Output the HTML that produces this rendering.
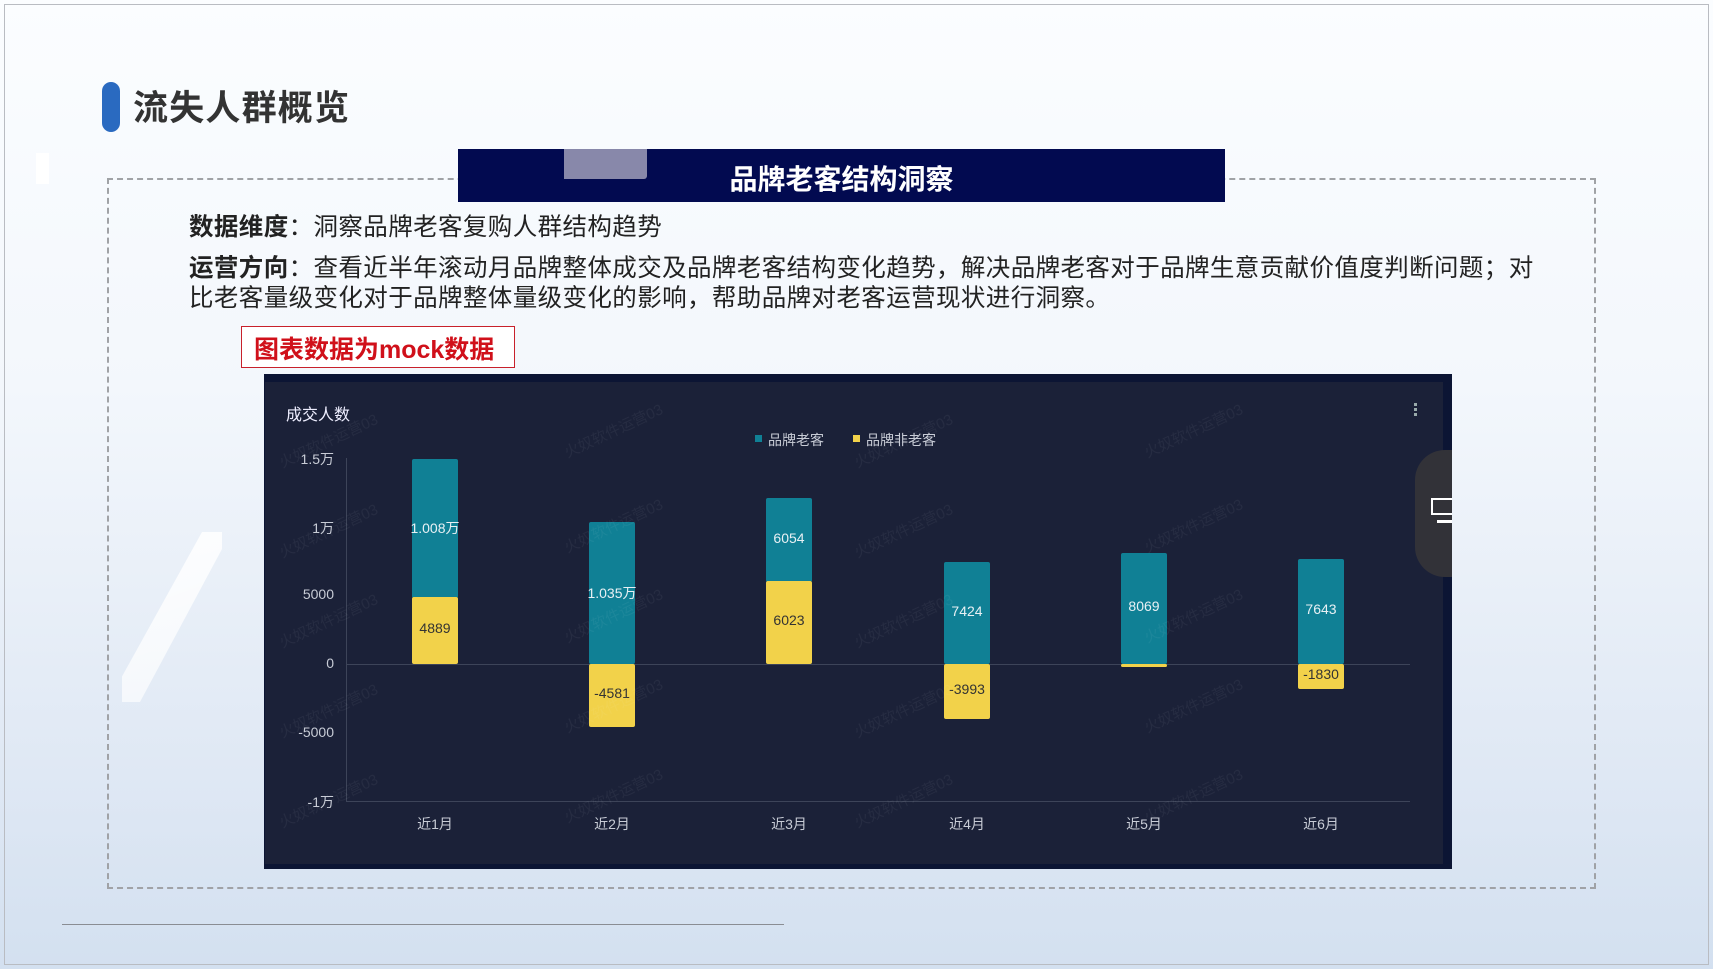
<!DOCTYPE html>
<html><head><meta charset="utf-8"><style>
*{margin:0;padding:0;box-sizing:border-box}
body{width:1713px;height:969px;overflow:hidden;position:relative;font-family:"Liberation Sans","Noto Sans CJK SC",sans-serif;background:linear-gradient(180deg,#fbfdff 0%,#f3f7fc 40%,#dfe8f4 80%,#d3e0f0 100%)}
.abs{position:absolute}
.frame{left:4px;top:4px;width:1705px;height:961px;border:1px solid #b9bcc2}
.t{white-space:nowrap}
.bar{position:absolute;width:46px;border-radius:2px}
.tl{background:#108095}.yl{background:#f2d24a}
.bl{position:absolute;width:80px;text-align:center;font-size:14px;white-space:nowrap}
.yt{position:absolute;left:268px;width:66px;text-align:right;font-size:14px;color:#c8ccd6}
.xl{position:absolute;top:814px;width:80px;text-align:center;font-size:14px;color:#c8ccd6}
.wm{position:absolute;color:rgba(255,255,255,0.05);font-size:15px;transform:rotate(-25deg);white-space:nowrap}
</style></head><body>
<div class="abs frame"></div>
<div class="abs" style="left:122px;top:532px;width:100px;height:170px;background:linear-gradient(160deg,rgba(255,255,255,0.9),rgba(255,255,255,0.6));clip-path:polygon(80% 0,100% 0,100% 10%,18% 100%,0 100%,0 85%)"></div>
<div class="abs" style="left:36px;top:153px;width:13px;height:31px;background:rgba(255,255,255,0.9)"></div>
<div class="abs" style="left:102px;top:82px;width:18px;height:50px;border-radius:9px;background:#2a6ac0"></div>
<div class="abs t" style="left:133px;top:80px;font-size:35px;font-weight:bold;color:#333;letter-spacing:1.2px">流失人群概览</div>
<div class="abs" style="left:107px;top:178px;width:1489px;height:711px;border:2px dashed #a0a2a6"></div>
<div class="abs" style="left:458px;top:149px;width:767px;height:53px;background:#020a50"></div>
<div class="abs" style="left:564px;top:149px;width:83px;height:30px;background:#8888aa;border-radius:0 0 3px 0"></div>
<div class="abs t" style="left:458px;top:158px;width:767px;text-align:center;font-size:28px;font-weight:bold;color:#fff">品牌老客结构洞察</div>
<div class="abs t" style="left:189px;top:213px;font-size:24.5px;color:#222;line-height:30px;letter-spacing:0.4px"><b>数据维度</b>：洞察品牌老客复购人群结构趋势</div>
<div class="abs t" style="left:189px;top:254px;font-size:24.5px;color:#222;line-height:30px;letter-spacing:0.4px"><b>运营方向</b>：查看近半年滚动月品牌整体成交及品牌老客结构变化趋势，解决品牌老客对于品牌生意贡献价值度判断问题；对<br>比老客量级变化对于品牌整体量级变化的影响，帮助品牌对老客运营现状进行洞察。</div>
<div class="abs" style="left:241px;top:326px;width:274px;height:42px;border:1.5px solid #c8212b;background:#fff"></div>
<div class="abs t" style="left:254px;top:330px;font-size:25px;font-weight:bold;color:#d0101a">图表数据为mock数据</div>

<div class="abs" style="left:264px;top:374px;width:1188px;height:495px;background:#0c1534"></div>
<div class="abs" style="left:265px;top:382px;width:1178px;height:482px;background:#1b2138"></div>
<div class="abs t" style="left:286px;top:401px;font-size:16px;color:#eef">成交人数</div>
<div class="abs" style="left:1414px;top:403px;width:3px;height:3px;background:#9aa;box-shadow:0 5px 0 #9aa,0 10px 0 #9aa"></div>
<div class="abs" style="left:755px;top:435px;width:7px;height:7px;background:#108095"></div>
<div class="abs t" style="left:768px;top:430px;font-size:14px;color:#c8ccd6">品牌老客</div>
<div class="abs" style="left:853px;top:435px;width:7px;height:7px;background:#f2d24a"></div>
<div class="abs t" style="left:866px;top:430px;font-size:14px;color:#c8ccd6">品牌非老客</div>

<div class="yt" style="top:449px">1.5万</div>
<div class="yt" style="top:518px">1万</div>
<div class="yt" style="top:586px">5000</div>
<div class="yt" style="top:655px">0</div>
<div class="yt" style="top:724px">-5000</div>
<div class="yt" style="top:792px">-1万</div>
<div class="abs" style="left:346px;top:458px;width:1px;height:344px;background:#3d4459"></div>
<div class="abs" style="left:346px;top:664px;width:1064px;height:1px;background:#3d4459"></div>
<div class="abs" style="left:346px;top:801px;width:1064px;height:1px;background:#3d4459"></div>

<div class="bar tl" style="left:412px;top:459px;height:139px"></div>
<div class="bar yl" style="left:412px;top:597px;height:67px"></div>
<div class="bl" style="left:395px;top:518px;color:#e8f0f4">1.008万</div>
<div class="bl" style="left:395px;top:620px;color:#333">4889</div>

<div class="bar tl" style="left:589px;top:522px;height:142px"></div>
<div class="bar yl" style="left:589px;top:664px;height:63px"></div>
<div class="bl" style="left:572px;top:583px;color:#e8f0f4">1.035万</div>
<div class="bl" style="left:572px;top:685px;color:#333">-4581</div>

<div class="bar tl" style="left:766px;top:498px;height:84px"></div>
<div class="bar yl" style="left:766px;top:581px;height:83px"></div>
<div class="bl" style="left:749px;top:530px;color:#e8f0f4">6054</div>
<div class="bl" style="left:749px;top:612px;color:#333">6023</div>

<div class="bar tl" style="left:944px;top:562px;height:102px"></div>
<div class="bar yl" style="left:944px;top:664px;height:55px"></div>
<div class="bl" style="left:927px;top:603px;color:#e8f0f4">7424</div>
<div class="bl" style="left:927px;top:681px;color:#333">-3993</div>

<div class="bar tl" style="left:1121px;top:553px;height:111px"></div>
<div class="bar yl" style="left:1121px;top:664px;height:3px"></div>
<div class="bl" style="left:1104px;top:598px;color:#e8f0f4">8069</div>

<div class="bar tl" style="left:1298px;top:559px;height:105px"></div>
<div class="bar yl" style="left:1298px;top:664px;height:25px"></div>
<div class="bl" style="left:1281px;top:601px;color:#e8f0f4">7643</div>
<div class="bl" style="left:1281px;top:666px;color:#333">-1830</div>

<div class="xl" style="left:395px">近1月</div>
<div class="xl" style="left:572px">近2月</div>
<div class="xl" style="left:749px">近3月</div>
<div class="xl" style="left:927px">近4月</div>
<div class="xl" style="left:1104px">近5月</div>
<div class="xl" style="left:1281px">近6月</div>

<div class="wm" style="left:275px;top:430px">火奴软件运营03</div>
<div class="wm" style="left:560px;top:420px">火奴软件运营03</div>
<div class="wm" style="left:850px;top:430px">火奴软件运营03</div>
<div class="wm" style="left:1140px;top:420px">火奴软件运营03</div>
<div class="wm" style="left:275px;top:520px">火奴软件运营03</div>
<div class="wm" style="left:560px;top:515px">火奴软件运营03</div>
<div class="wm" style="left:850px;top:520px">火奴软件运营03</div>
<div class="wm" style="left:1140px;top:515px">火奴软件运营03</div>
<div class="wm" style="left:275px;top:610px">火奴软件运营03</div>
<div class="wm" style="left:560px;top:605px">火奴软件运营03</div>
<div class="wm" style="left:850px;top:610px">火奴软件运营03</div>
<div class="wm" style="left:1140px;top:605px">火奴软件运营03</div>
<div class="wm" style="left:275px;top:700px">火奴软件运营03</div>
<div class="wm" style="left:560px;top:695px">火奴软件运营03</div>
<div class="wm" style="left:850px;top:700px">火奴软件运营03</div>
<div class="wm" style="left:1140px;top:695px">火奴软件运营03</div>
<div class="wm" style="left:275px;top:790px">火奴软件运营03</div>
<div class="wm" style="left:560px;top:785px">火奴软件运营03</div>
<div class="wm" style="left:850px;top:790px">火奴软件运营03</div>
<div class="wm" style="left:1140px;top:785px">火奴软件运营03</div>

<div class="abs" style="left:1415px;top:450px;width:37px;height:127px;background:#323238;border-radius:30px 0 0 30px"></div>
<div class="abs" style="left:1431px;top:498px;width:21px;height:17px;border:2px solid #fff;border-right:none"></div>
<div class="abs" style="left:1437px;top:520px;width:15px;height:3px;background:#fff"></div>

<div class="abs" style="left:62px;top:924px;width:722px;height:1px;background:#8a8d93"></div>
</body></html>
